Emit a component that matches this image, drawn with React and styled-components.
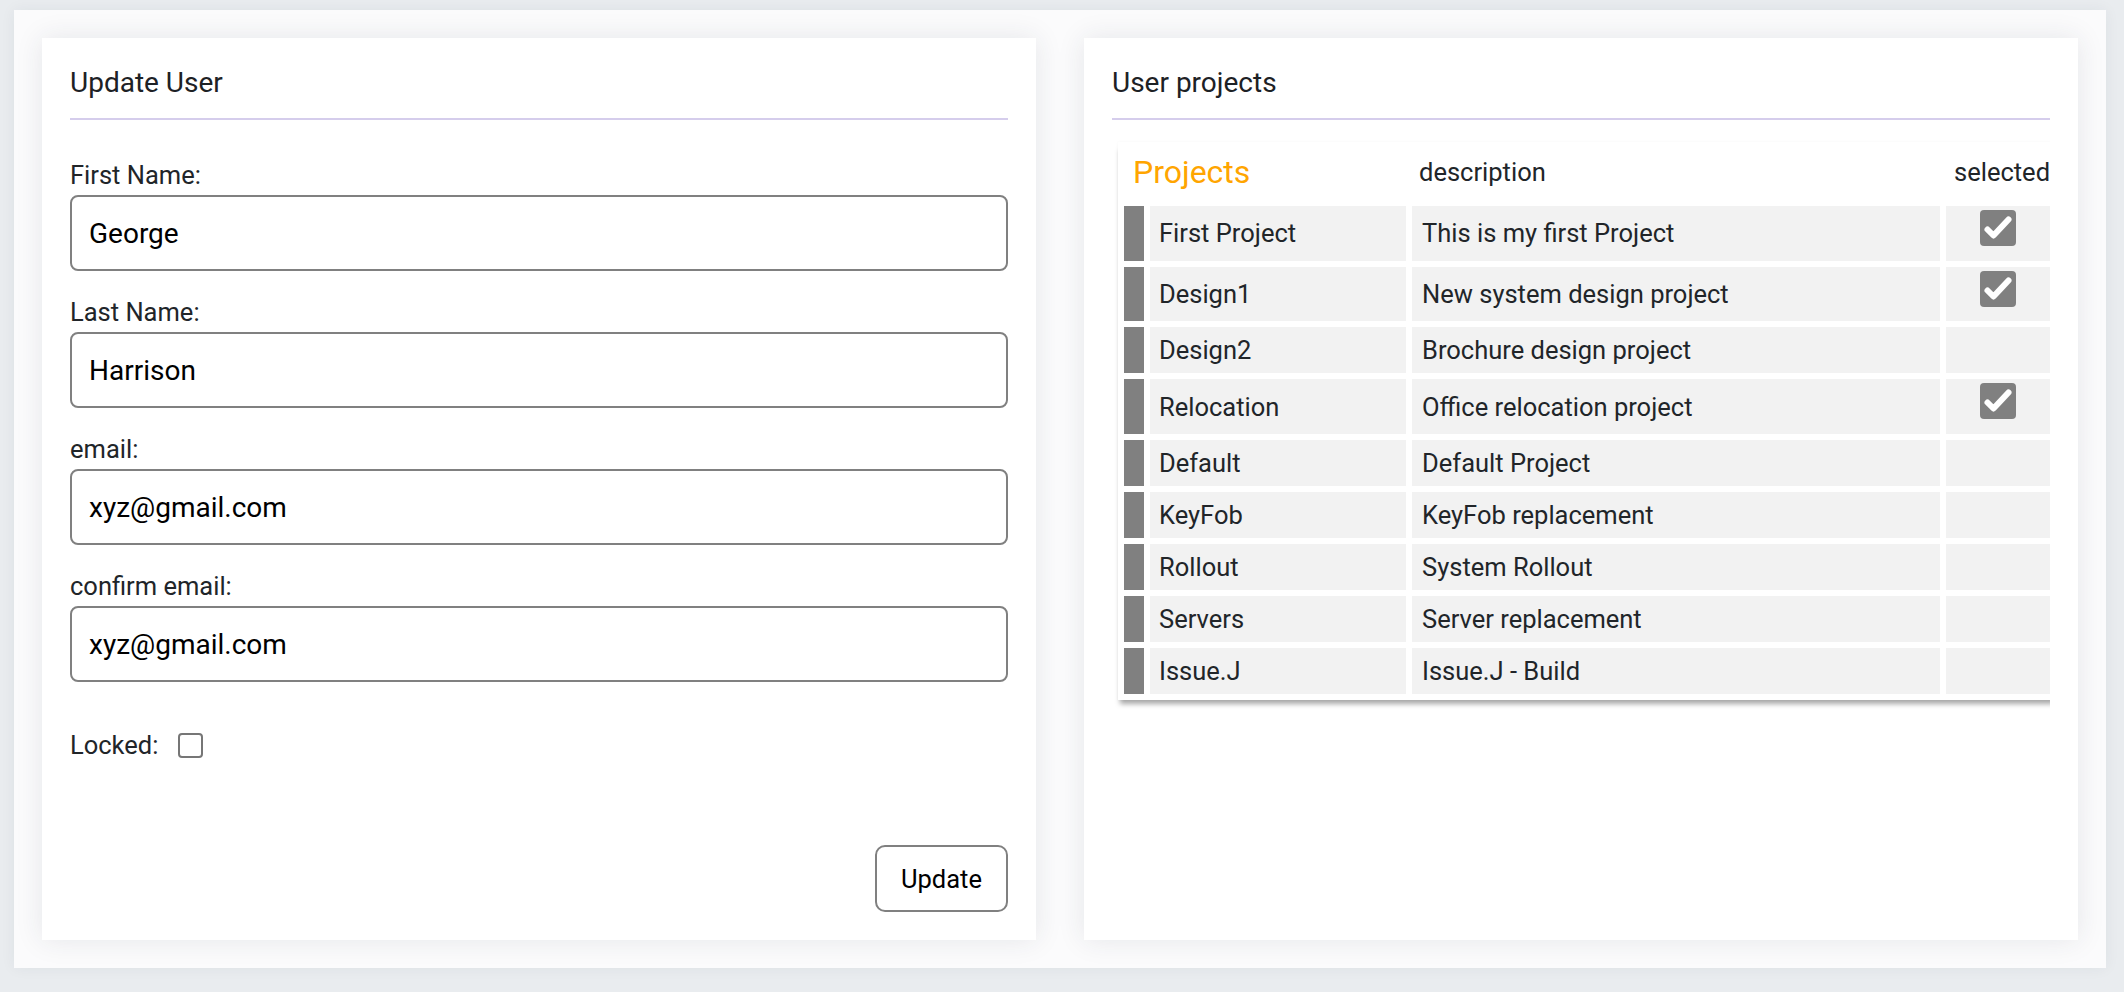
import React from "react";
import styled, { createGlobalStyle } from "styled-components";

const GlobalStyle = createGlobalStyle`
  html, body {
    margin: 0;
    padding: 0;
    background: #e9ecef;
    font-family: Roboto, "Liberation Sans", Arial, sans-serif;
    color: #212529;
  }
  * { box-sizing: border-box; }
`;

const Page = styled.div`
  height: 100vh;
  padding: 10px 18px 24px 14px;
  display: flex;
`;

const Container = styled.div`
  flex: 1;
  background: #fbfbfc;
  box-shadow: 0 0 14px rgba(40, 50, 70, 0.06);
  padding: 28px;
  display: grid;
  grid-template-columns: 1fr 1fr;
  gap: 48px;
`;

const Card = styled.section`
  background: #ffffff;
  box-shadow: 0 0 26px rgba(40, 50, 70, 0.1);
  padding: 28px;
  display: flex;
  flex-direction: column;
  min-width: 0;
`;

const CardTitle = styled.h2`
  margin: 0;
  font-size: 28px;
  font-weight: 400;
  line-height: 33px;
  color: #1d2125;
`;

const Divider = styled.hr`
  margin: 19px 0 0;
  border: 0;
  height: 2px;
  background: #d5cdec;
`;

const Form = styled.form`
  margin-top: 40px;
  display: flex;
  flex-direction: column;
  flex: 1;
`;

const Field = styled.div`
  display: flex;
  flex-direction: column;
  margin-bottom: 26px;
`;

const Label = styled.label`
  font-size: 25.5px;
  line-height: 30px;
  color: #212529;
`;

const TextInput = styled.input`
  margin-top: 5px;
  height: 76px;
  width: 100%;
  border: 2px solid #808080;
  border-radius: 8px;
  padding: 0 17px;
  font-family: Roboto, "Liberation Sans", Arial, sans-serif;
  font-size: 28px;
  color: #000;
  background: #fff;
  outline: none;
`;

const LockedRow = styled.div`
  margin-top: 22px;
  display: flex;
  align-items: center;
  gap: 20px;
  font-size: 25.5px;
  line-height: 30px;
`;

const CheckInput = styled.input`
  appearance: none;
  margin: 0;
  width: 25px;
  height: 25px;
  border: 2px solid #767676;
  border-radius: 4px;
  background: #fff;
`;

const SubmitButton = styled.button`
  margin-top: auto;
  align-self: flex-end;
  width: 133px;
  height: 67px;
  border: 2px solid #808080;
  border-radius: 10px;
  background: #fff;
  font-family: Roboto, "Liberation Sans", Arial, sans-serif;
  font-size: 25.5px;
  color: #000;
  cursor: pointer;
`;

const TableWrap = styled.div`
  margin-top: 20px;
  padding: 2px 0 14px 6px;
  overflow: hidden;
`;

const Table = styled.table`
  width: 938px;
  table-layout: fixed;
  border-collapse: separate;
  border-spacing: 6px;
  background: #fff;
  box-shadow: 0 6px 5px -2px rgba(0, 0, 0, 0.34), 0 0 3px rgba(0, 0, 0, 0.035);
  font-size: 25.5px;
  color: #212529;
`;

const HeadCell = styled.th`
  height: 52px;
  padding: 0 0 4px ${(p) => p.$pad || 8}px;
  text-align: left;
  vertical-align: middle;
  font-weight: 400;
  white-space: nowrap;
  font-size: ${(p) => (p.$accent ? "32px" : "25.5px")};
  color: ${(p) => (p.$accent ? "#ffa500" : "#212529")};
`;

const BarCell = styled.td`
  background: #808080;
  padding: 0;
`;

const Cell = styled.td`
  background: #f2f2f2;
  padding: 8px ${(p) => p.$pad || 9}px;
  line-height: 30px;
  white-space: nowrap;
  overflow: hidden;
  vertical-align: middle;
`;

const CheckCell = styled.td`
  background: #f2f2f2;
  padding: 4px 0 14.7px;
  text-align: center;
  vertical-align: top;
`;

const CheckBox = styled.span`
  display: inline-flex;
  width: 36px;
  height: 36px;
  border-radius: 4px;
  background: #808080;
  vertical-align: top;
`;

const projects = [
  { name: "First Project", desc: "This is my first Project", sel: true },
  { name: "Design1", desc: "New system design project", sel: true },
  { name: "Design2", desc: "Brochure design project", sel: false },
  { name: "Relocation", desc: "Office relocation project", sel: true },
  { name: "Default", desc: "Default Project", sel: false },
  { name: "KeyFob", desc: "KeyFob replacement", sel: false },
  { name: "Rollout", desc: "System Rollout", sel: false },
  { name: "Servers", desc: "Server replacement", sel: false },
  { name: "Issue.J", desc: "Issue.J - Build", sel: false },
];

const Check = () => (
  <CheckBox>
    <svg width="36" height="36" viewBox="0 0 36 36">
      <polyline
        points="7.5,19.5 13.5,25.5 28.5,9.5"
        fill="none"
        stroke="#fff"
        strokeWidth="6"
        strokeLinecap="round"
        strokeLinejoin="round"
      />
    </svg>
  </CheckBox>
);

const fields = [
  { id: "first", label: "First Name:", value: "George" },
  { id: "last", label: "Last Name:", value: "Harrison" },
  { id: "email", label: "email:", value: "xyz@gmail.com" },
  { id: "confirm", label: "confirm email:", value: "xyz@gmail.com" },
];

export default function App() {
  return (
    <>
      <GlobalStyle />
      <Page>
        <Container>
          <Card>
            <CardTitle>Update User</CardTitle>
            <Divider />
            <Form onSubmit={(e) => e.preventDefault()}>
              {fields.map((f) => (
                <Field key={f.id}>
                  <Label htmlFor={f.id}>{f.label}</Label>
                  <TextInput id={f.id} defaultValue={f.value} />
                </Field>
              ))}
              <LockedRow>
                <Label htmlFor="locked">Locked:</Label>
                <CheckInput id="locked" type="checkbox" />
              </LockedRow>
              <SubmitButton type="submit">Update</SubmitButton>
            </Form>
          </Card>
          <Card>
            <CardTitle>User projects</CardTitle>
            <Divider />
            <TableWrap>
              <Table>
                <colgroup>
                  <col style={{ width: 20 }} />
                  <col style={{ width: 256 }} />
                  <col style={{ width: 528 }} />
                  <col style={{ width: 104 }} />
                </colgroup>
                <thead>
                  <tr>
                    <HeadCell colSpan={2} $accent $pad={9}>
                      Projects
                    </HeadCell>
                    <HeadCell $pad={7}>description</HeadCell>
                    <HeadCell $pad={8}>selected</HeadCell>
                  </tr>
                </thead>
                <tbody>
                  {projects.map((p) => (
                    <tr key={p.name}>
                      <BarCell />
                      <Cell>{p.name}</Cell>
                      <Cell $pad={10}>{p.desc}</Cell>
                      <CheckCell>{p.sel ? <Check /> : null}</CheckCell>
                    </tr>
                  ))}
                </tbody>
              </Table>
            </TableWrap>
          </Card>
        </Container>
      </Page>
    </>
  );
}
